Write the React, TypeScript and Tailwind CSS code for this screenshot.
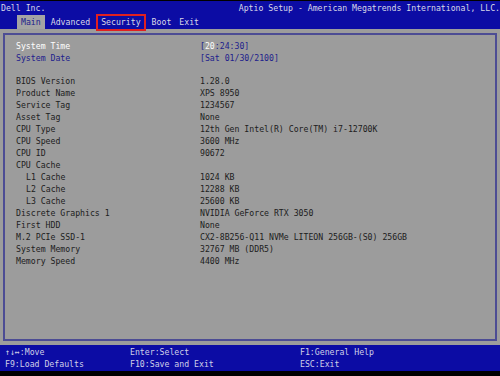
const rows: { label: string; value: string; indent?: boolean }[] = [
  { label: 'BIOS Version', value: '1.28.0' },
  { label: 'Product Name', value: 'XPS 8950' },
  { label: 'Service Tag', value: '1234567' },
  { label: 'Asset Tag', value: 'None' },
  { label: 'CPU Type', value: '12th Gen Intel(R) Core(TM) i7-12700K' },
  { label: 'CPU Speed', value: '3600 MHz' },
  { label: 'CPU ID', value: '90672' },
  { label: 'CPU Cache', value: '' },
  { label: 'L1 Cache', value: '1024 KB', indent: true },
  { label: 'L2 Cache', value: '12288 KB', indent: true },
  { label: 'L3 Cache', value: '25600 KB', indent: true },
  { label: 'Discrete Graphics 1', value: 'NVIDIA GeForce RTX 3050' },
  { label: 'First HDD', value: 'None' },
  { label: 'M.2 PCIe SSD-1', value: 'CX2-8B256-Q11 NVMe LITEON 256GB-(S0) 256GB' },
  { label: 'System Memory', value: '32767 MB (DDR5)' },
  { label: 'Memory Speed', value: '4400 MHz' },
];

const tabs = ['Main', 'Advanced', 'Security', 'Boot', 'Exit'];

export default function App() {
  return (
    <div className="w-[500px] h-[376px] flex flex-col bg-[#9c9c9c] font-['DejaVu_Sans_Mono',monospace] text-[8.2px] leading-[12px] overflow-hidden">
      {/* header */}
      <div className="h-[29px] bg-[#0c0ca4] border-t border-black text-[#d8d8e8] flex flex-col">
        <div className="flex justify-between h-[13px] items-center">
          <span className="pl-[1px]">Dell Inc.</span>
          <span>Aptio Setup - American Megatrends International, LLC.</span>
        </div>
        <div className="flex items-end h-[15px] pl-[17px]">
          {tabs.map((t) =>
            t === 'Main' ? (
              <span key={t} className="bg-[#a4a4a4] text-[#1c1c8c] px-[4px] h-[14px] leading-[14px]">{t}</span>
            ) : t === 'Security' ? (
              <span key={t} className="ml-[4px] px-[3px] h-[17px] leading-[13px] border-2 border-[#e02020] self-center mt-[1px]">{t}</span>
            ) : (
              <span key={t} className="ml-[4px] px-[2px] h-[14px] leading-[14px]">{t}</span>
            )
          )}
        </div>
      </div>

      {/* main panel */}
      <div className="flex-1 px-[3px] pt-[4px] pb-[4px]">
        <div className="h-full border-2 border-[#4c4c94] pl-[11px] pt-[5px] text-[#202020]">
          <div className="flex h-[12px]">
            <span className="w-[184px] text-white">System Time</span>
            <span className="text-[#20208c]">[<span className="text-white">20</span>:24:30]</span>
          </div>
          <div className="flex h-[12px]">
            <span className="w-[184px] text-[#20208c]">System Date</span>
            <span className="text-[#20208c]">[Sat 01/30/2100]</span>
          </div>
          <div className="h-[11px]" />
          {rows.map((r) => (
            <div key={r.label} className="flex h-[12px]">
              <span className={r.indent ? 'w-[184px] pl-[10px]' : 'w-[184px]'}>{r.label}</span>
              <span>{r.value}</span>
            </div>
          ))}
        </div>
      </div>

      {/* footer */}
      <div className="h-[26px] bg-[#0c0ca4] text-[#d0d0e8] pl-[5px] pt-[1px]">
        <div className="flex h-[12px]">
          <span className="w-[125px]">↑↓↔:Move</span>
          <span className="w-[170px]">Enter:Select</span>
          <span>F1:General Help</span>
        </div>
        <div className="flex h-[12px]">
          <span className="w-[125px]">F9:Load Defaults</span>
          <span className="w-[170px]">F10:Save and Exit</span>
          <span>ESC:Exit</span>
        </div>
      </div>
      <div className="h-[5px] bg-black" />
    </div>
  );
}
